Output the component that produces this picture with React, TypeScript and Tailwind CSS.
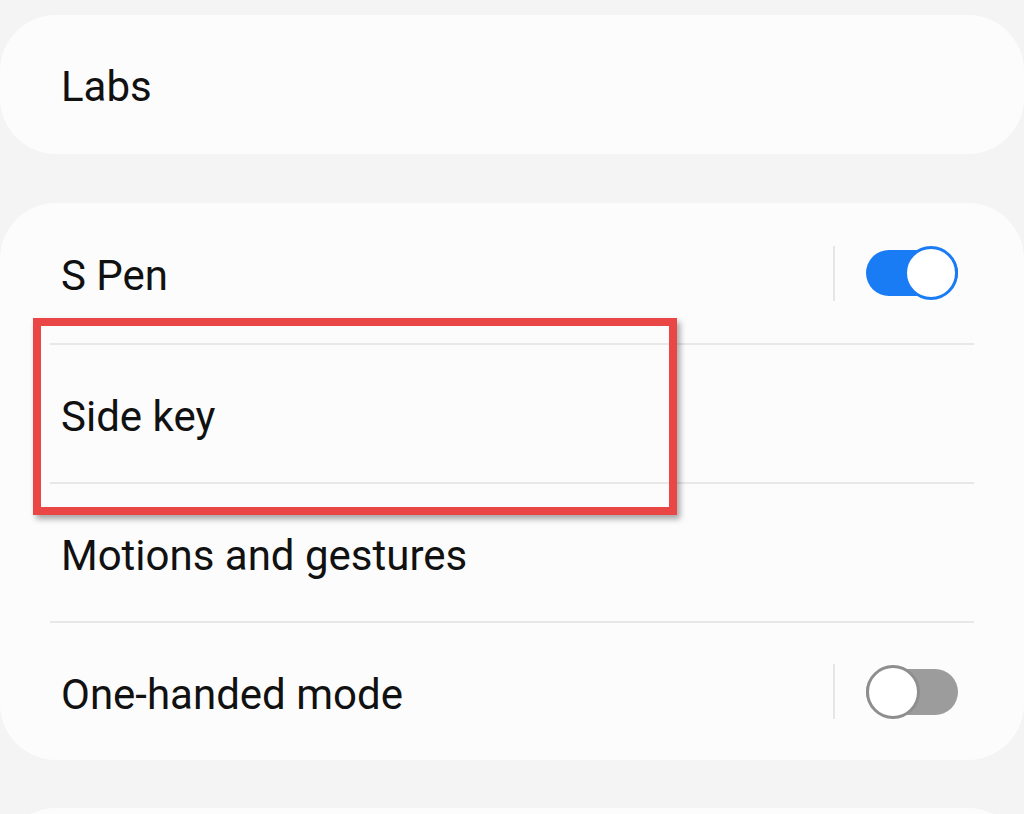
export default function App() {
  return (
    <div
      className="h-[814px] w-[1024px] overflow-hidden bg-[#f4f4f4] pt-[15px] text-[#111111]"
      style={{ fontFamily: "Roboto, 'Noto Sans', sans-serif" }}
    >
      {/* Labs */}
      <section className="flex h-[139px] items-center rounded-[56px] bg-[#fcfcfc] px-[61px]">
        <span className="pt-[5px] text-[42px] leading-none">Labs</span>
      </section>

      {/* Main group */}
      <section className="relative mt-[49px] rounded-[56px] bg-[#fcfcfc] px-[50px]">
        <Row label="S Pen" toggle="on" first />
        <Divider />
        <Row label="Side key" />
        <Divider />
        <Row label="Motions and gestures" />
        <Divider />
        <Row label="One-handed mode" toggle="off" />

        {/* highlight box */}
        <div className="pointer-events-none absolute left-[33px] top-[115px] h-[197px] w-[644px] border-[8px] border-[#ea4646] shadow-[3px_4px_6px_rgba(0,0,0,0.35)]" />
      </section>

      <section className="mt-[48px] h-[139px] rounded-[56px] bg-[#fcfcfc]" />
    </div>
  );
}

function Divider() {
  return <div className="h-[2px] bg-[#e8e8e8]" />;
}

function Row({
  label,
  toggle,
  first,
}: {
  label: string;
  toggle?: "on" | "off";
  first?: boolean;
}) {
  return (
    <div
      className={
        first
          ? "flex h-[140px] items-center pl-[11px] pr-[16px]"
          : "flex h-[137px] items-center pl-[11px] pr-[16px]"
      }
    >
      <span className="flex-1 pt-[6px] text-[42px] leading-none">{label}</span>
      {toggle && (
        <div className="flex items-center">
          <div className="mr-[31px] h-[55px] w-[2px] bg-[#e6e6e6]" />
          <Switch on={toggle === "on"} />
        </div>
      )}
    </div>
  );
}

function Switch({ on }: { on: boolean }) {
  return (
    <div className="relative flex h-[54px] w-[92px] items-center">
      <div
        className={
          on
            ? "h-[46px] w-full rounded-full bg-[#1a7cf4]"
            : "h-[46px] w-full rounded-full bg-[#9c9c9c]"
        }
      />
      <div
        className={
          on
            ? "absolute right-0 top-0 h-[54px] w-[54px] rounded-full border-[3px] border-[#1a7cf4] bg-white"
            : "absolute left-0 top-0 h-[54px] w-[54px] rounded-full border-[3px] border-[#8e8e8e] bg-white"
        }
      />
    </div>
  );
}
